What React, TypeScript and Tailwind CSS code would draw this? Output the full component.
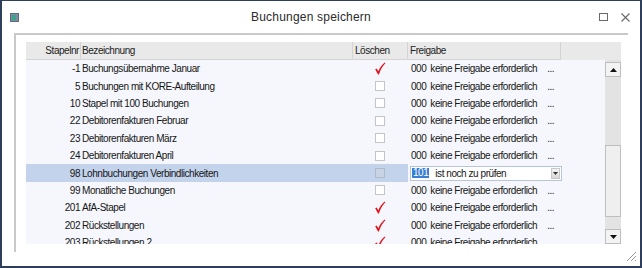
import React from 'react'

type Row = { nr: string; name: string; del: 'check' | 'box'; selected?: boolean }

const rows: Row[] = [
  { nr: '-1', name: 'Buchungsübernahme Januar', del: 'check' },
  { nr: '5', name: 'Buchungen mit KORE-Aufteilung', del: 'box' },
  { nr: '10', name: 'Stapel mit 100 Buchungen', del: 'box' },
  { nr: '22', name: 'Debitorenfakturen Februar', del: 'box' },
  { nr: '23', name: 'Debitorenfakturen März', del: 'box' },
  { nr: '24', name: 'Debitorenfakturen April', del: 'box' },
  { nr: '98', name: 'Lohnbuchungen Verbindlichkeiten', del: 'box', selected: true },
  { nr: '99', name: 'Monatliche Buchungen', del: 'box' },
  { nr: '201', name: 'AfA-Stapel', del: 'check' },
  { nr: '202', name: 'Rückstellungen', del: 'check' },
  { nr: '203', name: 'Rückstellungen 2', del: 'check' },
]

function RedCheck() {
  return (
    <svg width="12" height="13" viewBox="0 0 12 13">
      <path d="M1.2 7.2 L2.6 6.4 L4.4 9.2 C6 5.6 8 2.6 10.8 0.6 L11.4 1.2 C8.6 4 6.6 7.6 4.9 12.4 L4 12.4 Z" fill="#e3141e" />
    </svg>
  )
}

function Box({ dim }: { dim?: boolean }) {
  return (
    <div className={`w-[10px] h-[10px] border ${dim ? 'border-[#aeb9c9] bg-[#c8d3e4]' : 'border-[#c4c4c4] bg-white'}`} />
  )
}

function ScrollBtn({ up }: { up?: boolean }) {
  return (
    <div className="h-[15px] w-[16px] border border-[#bdbdbd] bg-[#f3f3f3] flex items-center justify-center">
      <svg width="7" height="4" viewBox="0 0 7 4">
        {up ? <path d="M0 4 L3.5 0 L7 4 Z" fill="#111" /> : <path d="M0 0 L7 0 L3.5 4 Z" fill="#111" />}
      </svg>
    </div>
  )
}

export default function App() {
  return (
    <div className="w-[642px] h-[268px] bg-white border-[#2e3f5c] border-t border-x-2 border-b-2 flex flex-col overflow-hidden font-['Liberation_Sans',Arial,sans-serif]">
      {/* Title bar */}
      <div className="h-[32px] flex items-center relative">
        <div className="ml-[8px] w-[9px] h-[9px] bg-[#7d8ea3] border border-[#5b6b80] flex items-end justify-start p-[1px]">
          <div className="w-[4px] h-[5px] bg-[#3aa58a]" />
        </div>
        <div className="flex-1 text-center text-[12px] text-[#2b2b2b] tracking-[0.2px] pl-[4px]">Buchungen speichern</div>
        <div className="w-[9px] h-[8px] border border-[#6a6a6a] mr-[13px]" />
        <svg width="9" height="9" viewBox="0 0 9 9" className="mr-[10px]">
          <path d="M0.5 0.5 L8.5 8.5 M8.5 0.5 L0.5 8.5" stroke="#6a6a6a" strokeWidth="1.1" />
        </svg>
      </div>

      {/* Group box */}
      <div className="flex-1 relative">
        <div className="ml-[12px] w-[614px] h-[219px] border-t-2 border-l-2 border-[#c9c9c9] pl-[10px] pt-[7px]">
          <div className="w-[595px] h-[202px] flex flex-col text-[10px] tracking-[-0.45px] text-[#161616]">
            {/* header */}
            <div className="h-[18px] flex bg-[#e9e9e9] text-[#222] leading-[17px]">
              <div className="w-[55px] border-r border-b border-[#d4d4d4] text-right pr-[1px]">Stapelnr</div>
              <div className="w-[272px] border-r border-b border-[#d4d4d4] pl-[1px]">Bezeichnung</div>
              <div className="w-[55px] border-r border-b border-[#d4d4d4] pl-[2px]">Löschen</div>
              <div className="w-[153px] border-r border-b border-[#d4d4d4] pl-[2px]">Freigabe</div>
              <div className="flex-1 border-b border-[#e9e9e9]" />
            </div>
            {/* body */}
            <div className="flex-1 flex min-h-0">
              <div className="w-[579px] bg-[#f5f7fc] overflow-hidden">
                {rows.map((r) => (
                  <div
                    key={r.nr}
                    className={`h-[17.4px] flex items-center ${r.selected ? 'bg-[linear-gradient(to_right,#c3d3ec_0,#c3d3ec_382px,transparent_382px)]' : ''}`}
                  >
                    <div className="w-[55px] text-right pr-[1px]">{r.nr}</div>
                    <div className="w-[272px] pl-[1px] whitespace-nowrap">{r.name}</div>
                    <div className="w-[55px] flex justify-center pr-[1px]">
                      {r.del === 'check' ? <RedCheck /> : <Box dim={r.selected} />}
                    </div>
                    {r.selected ? (
                      <div className="ml-[2px] w-[152px] h-[15px] bg-white border border-[#b8c5d8] flex items-center">
                        <span className="bg-[#3a7fd4] text-white px-[1px] ml-[1px] leading-[10px] h-[10px]">101</span>
                        <span className="ml-[6px] flex-1 whitespace-nowrap">ist noch zu prüfen</span>
                        <div className="w-[9px] h-[11px] mr-[1px] bg-[linear-gradient(#f4f4f4,#d8d8d8)] border border-[#c8c8c8] flex items-center justify-center">
                          <svg width="5" height="3" viewBox="0 0 5 3"><path d="M0 0 L5 0 L2.5 3 Z" fill="#333" /></svg>
                        </div>
                      </div>
                    ) : (
                      <div className="w-[153px] pl-[3px] flex whitespace-nowrap">
                        <span>000</span>
                        <span className="ml-[4px]">keine Freigabe erforderlich</span>
                        <span className="ml-[10px]">...</span>
                      </div>
                    )}
                  </div>
                ))}
              </div>
              {/* scrollbar */}
              <div className="w-[16px] flex flex-col bg-[#e3e3e3] pt-[2px]">
                <ScrollBtn up />
                <div className="flex-1 relative">
                  <div className="absolute left-0 top-[68px] w-[16px] h-[72px] bg-[#efefef] border border-[#bfbfbf]" />
                </div>
                <ScrollBtn />
              </div>
            </div>
          </div>
        </div>
        {/* resize grip */}
        <svg width="12" height="12" viewBox="0 0 12 12" className="absolute right-[3px] bottom-[4px]">
          <path d="M11 2 L2 11 M11 6 L6 11 M11 10 L10 11" stroke="#9a9a9a" strokeWidth="1" />
        </svg>
      </div>
    </div>
  )
}
